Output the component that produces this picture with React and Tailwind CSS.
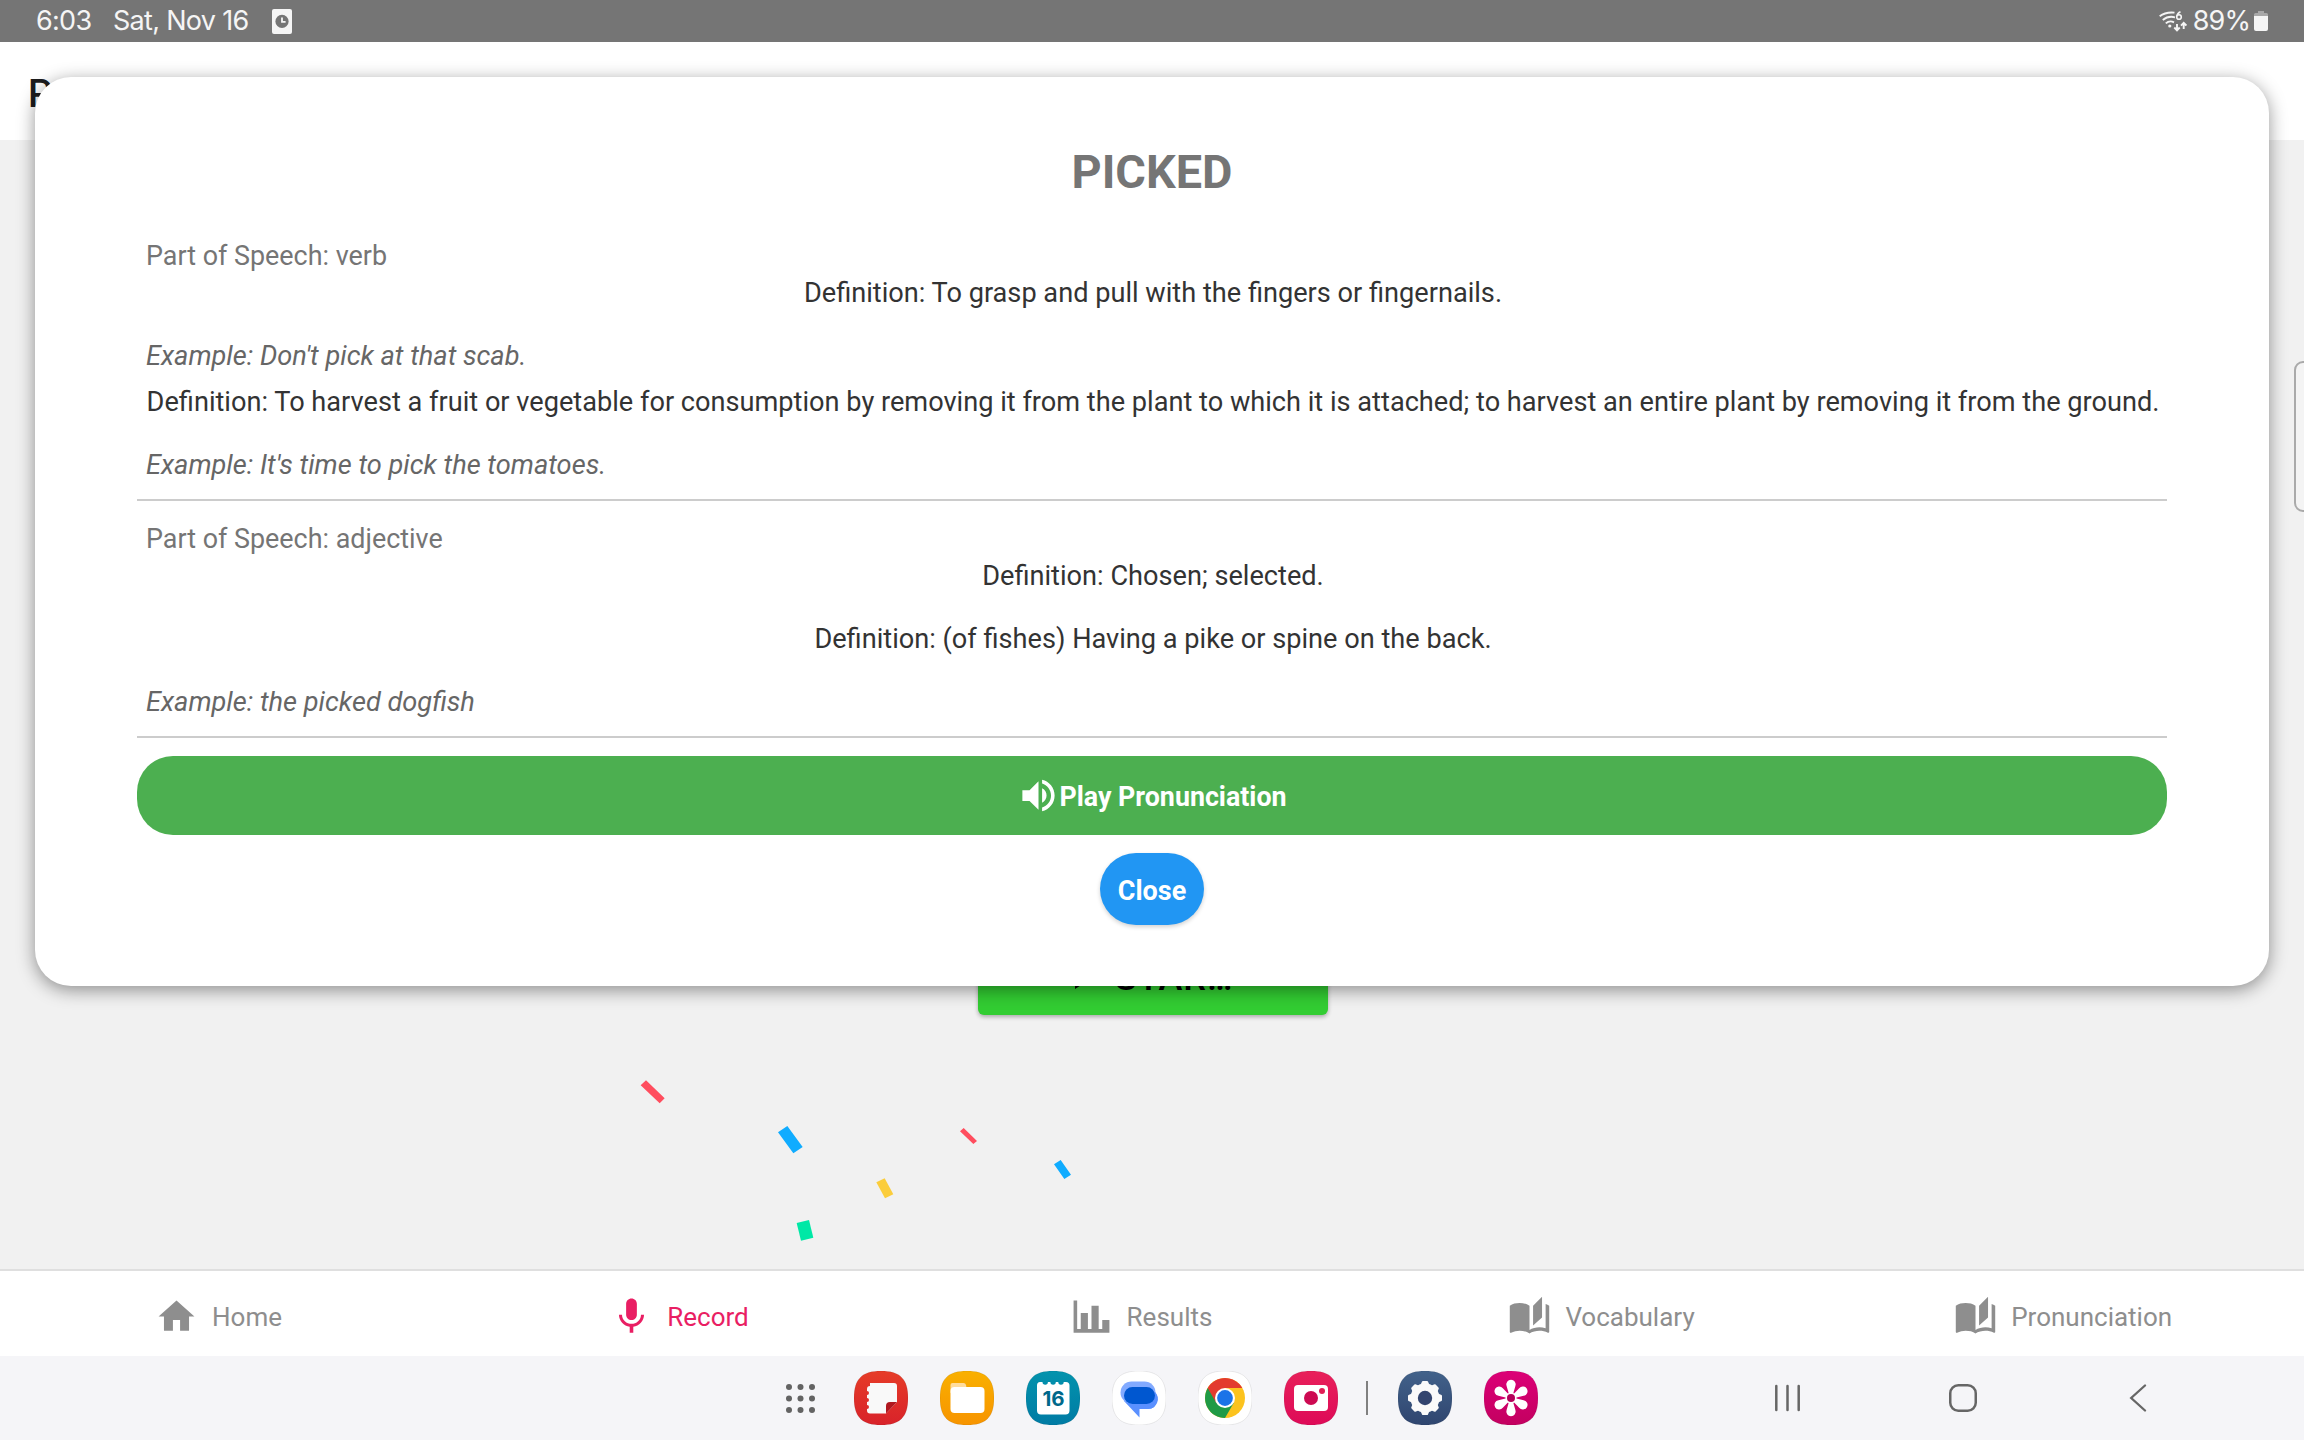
import { MdHome, MdMic, MdAutoStories, MdVolumeUp, MdPlayArrow } from "react-icons/md";

const SQUIRCLE = "M27 0C46 0 54 8 54 27S46 54 27 54 0 46 0 27 8 0 27 0Z";

function StatusBar() {
  return (
    <div className="flex h-[42px] shrink-0 items-center justify-between bg-[#757575] pl-9 pr-9 font-[Inter] text-[27px] leading-[42px] text-[#f5f5f5]">
      <div className="flex items-center">
        <span className="w-[77px] tracking-[-0.7px]">6:03</span>
        <span className="w-[159px] whitespace-nowrap tracking-[-0.7px]">Sat, Nov 16</span>
        <svg className="h-[25px] w-5" viewBox="0 0 20 25">
          <rect width="20" height="25" rx="2" fill="#f5f5f5" />
          <circle cx="10" cy="12.4" r="6.6" fill="#757575" />
          <path d="M10 8.5v4.4h3.6" fill="none" stroke="#f5f5f5" strokeWidth="1.8" />
        </svg>
      </div>
      <div className="flex items-center">
        <svg className="mr-[6px] h-[22px] w-7" viewBox="0 0 28 22" fill="none" stroke="#f5f5f5" strokeWidth="1.9">
          <path d="M.7 6.2Q6.5 1.7 15.5 2.6M3.8 10Q9 5.6 16 7.3M6.8 13.4Q10.5 10 15 12.3" />
          <circle cx="10.8" cy="16" r="1.6" fill="#f5f5f5" stroke="none" />
          <circle cx="20" cy="7" r="2.3" strokeWidth="1.6" />
          <path d="M18 6Q18.4 3 21.5 1.8" strokeWidth="1.6" />
          <path d="M18 14v6M15.3 17.5l2.7 2.8 2.7-2.8M24.7 19v-6M22 15.6l2.7-2.8 2.7 2.8" />
        </svg>
        <span className="mr-[4px] tracking-[-0.9px]">89%</span>
        <svg className="h-5 w-[14px]" viewBox="0 0 14 20">
          <path d="M0 5V3.5Q0 2 1.5 2H4V0h6v2h2.500Q14 2 14 3.5V5Z" fill="#a8a8a8" />
          <path d="M0 5h14v13q0 2-2 2H2q-2 0-2-2Z" fill="#f5f5f5" />
        </svg>
      </div>
    </div>
  );
}

function Part({ children }) {
  return <p className="h-[37px] px-[9px] text-[26.9px] text-[#757575]">{children}</p>;
}

function Definition({ children }) {
  return <p className="-mr-[10px] -ml-2 mb-[26px] h-[37px] whitespace-nowrap text-center text-[27.16px] text-[#333333]">{children}</p>;
}

function Example({ children }) {
  return <p className="h-[37px] px-[9px] text-[27.2px] italic text-[#666666]">{children}</p>;
}

function WordDialog() {
  return (
    <div className="absolute top-[77px] left-[35px] flex h-[909px] w-[2234px] flex-col rounded-[36px] bg-white px-[102px] text-[27px] leading-[37px] shadow-[0_4px_18px_rgba(0,0,0,0.42)]">
      <h1 className="mt-[65px] h-[60px] text-center text-[46.8px] leading-[60px] font-bold text-[#757575]">PICKED</h1>
      <section className="mt-[36px] h-[263px] border-b-2 border-[#cccccc]">
        <Part>Part of Speech: verb</Part>
        <Definition>Definition: To grasp and pull with the fingers or fingernails.</Definition>
        <Example>Example: Don't pick at that scab.</Example>
        <div className="h-[9px]" />
        <Definition>
          Definition: To harvest a fruit or vegetable for consumption by removing it from the plant to which it is attached; to harvest an entire plant by removing it from the ground.
        </Definition>
        <Example>Example: It's time to pick the tomatoes.</Example>
      </section>
      <section className="mt-[20px] h-[217px] border-b-2 border-[#cccccc]">
        <Part>Part of Speech: adjective</Part>
        <Definition>Definition: Chosen; selected.</Definition>
        <Definition>Definition: (of fishes) Having a pike or spine on the back.</Definition>
        <Example>Example: the picked dogfish</Example>
      </section>
      <button className="mt-[18px] flex h-[79px] shrink-0 items-center justify-center rounded-[36px] bg-[#4caf50] text-[26.8px] font-bold text-white">
        <MdVolumeUp className="size-[43px]" />
        <span className="-ml-[1px] pt-[3px]">Play Pronunciation</span>
      </button>
      <button className="mt-[18px] h-[72px] w-[104px] shrink-0 self-center rounded-[36px] bg-[#2196f3] pt-[4px] font-bold text-white shadow-[0_2px_4px_rgba(0,0,0,0.18)]">
        Close
      </button>
    </div>
  );
}

function Confetti() {
  return (
    <svg className="absolute top-[1060px] left-[620px] h-[200px] w-[480px]" viewBox="0 0 1440 600">
      <path fill="#ff4d5e" d="M62 76L78 61 134 115 119 130ZM1020 214L1031 204 1071 243 1060 252Z" />
      <path fill="#10acff" d="M474 217L502 198 548 261 520 280ZM1302 313L1322 300 1353 344 1333 357Z" />
      <path fill="#fbcd3b" d="M769 367L794 355 820 403 795 415Z" />
      <path fill="#00e8a6" d="M530 489L567 480 580 533 543 542Z" />
    </svg>
  );
}

function ChartIcon({ className }) {
  return (
    <svg className={className} viewBox="0 0 24 24" fill="currentColor">
      <path d="M22 21H2V3h2v16h2v-9h4v9h2V6h4v13h2v-5h4v7Z" />
    </svg>
  );
}

const TABS = [
  { label: "Home", icon: MdHome, pad: "pl-[155px]" },
  { label: "Record", icon: MdMic, pad: "pl-[149.500px]", active: true },
  { label: "Results", icon: ChartIcon, pad: "pl-[148px]" },
  { label: "Vocabulary", icon: MdAutoStories, pad: "pl-[126px]" },
  { label: "Pronunciation", icon: MdAutoStories, pad: "pl-[111px]" },
];

function TabBar() {
  return (
    <nav className="grid h-[87px] shrink-0 grid-cols-5 border-t-2 border-[#dfdfdf] bg-white">
      {TABS.map(({ label, icon: Icon, pad, active }) => (
        <div key={label} className={`flex items-center pt-[5px] ${pad} ${active ? "text-[#e91e63]" : "text-[#8e8e8e]"}`}>
          <Icon className="size-[43px]" />
          <span className="ml-[14px] pt-[3px] text-[26px] whitespace-nowrap">{label}</span>
        </div>
      ))}
    </nav>
  );
}

function AppIcon({ id, from, to, children }) {
  return (
    <svg className="size-[54px]" viewBox="0 0 54 54">
      <defs>
        <linearGradient id={id} x2="0" y2="1">
          <stop stopColor={from} />
          <stop offset="1" stopColor={to} />
        </linearGradient>
      </defs>
      <path d={SQUIRCLE} fill={`url(#${id})`} stroke="#00000014" strokeWidth="1" />
      {children}
    </svg>
  );
}

function Taskbar() {
  return (
    <div className="flex h-[84px] shrink-0 items-center bg-[#f5f5f8] pl-[786px]">
      <svg className="mr-[25px] size-[29px]" viewBox="0 0 29 29" fill="#636363">
        {[3, 14.5, 26].map((y) => [3, 14.5, 26].map((x) => <circle key={`${x}-${y}`} cx={x} cy={y} r="3" />))}
      </svg>
      <div className="ml-[14px] flex gap-8">
        <AppIcon id="notes" from="#e63c28" to="#d8222a">
          <path d="M16 12h24q3 0 3 3v16l-11 11.500H16q-3 0-3-3v-1.500a2 2 0 0 0 0-4v-3a2 2 0 0 0 0-4v-3a2 2 0 0 0 0-4v-2q0-3 3-3Z" fill="#f9f9f9" />
          <path d="M32 42.500V35q0-4 4-4h7Z" fill="#b0181f" />
        </AppIcon>
        <AppIcon id="files" from="#f9b000" to="#f79400">
          <path d="M10.500 22V14q0-2 2-2h11q2 0 2.500 2l.5 3Z" fill="#ffdc9c" />
          <rect x="10.500" y="16" width="34" height="26" rx="4" fill="#fff" />
        </AppIcon>
        <AppIcon id="calendar" from="#0393ad" to="#007ba4">
          <path d="M14 11h2.500a2.700 2.700 0 0 0 5.400 0h2.500a2.700 2.700 0 0 0 5.400 0h2.500a2.700 2.700 0 0 0 5.400 0H40q3.500 0 3.500 3.500v25q0 4-4 4h-24.500q-4 0-4-4v-25q0-3.500 3-3.500Z" fill="#fff" />
          <text x="27.500" y="35" textAnchor="middle" fontFamily="Inter" fontWeight="700" fontSize="20.500" fill="#00688a">16</text>
        </AppIcon>
        <AppIcon id="messages" from="#fff" to="#fff">
          <path d="M12 30L27.500 46.500V38H35q10 0 10-10t-10-10H20Z" fill="#5a90ff" />
          <rect x="8.500" y="10.500" width="35" height="22" rx="11" fill="#82aaff" />
          <path d="M36 38a10 10 0 0 0 7-17L30 32l-3 6Z" fill="#5a90ff" />
          <rect x="12" y="16" width="31" height="17" rx="8.500" fill="#0057d0" />
        </AppIcon>
        <AppIcon id="chrome" from="#fff" to="#fff">
          <circle cx="27" cy="27" r="20" fill="#fcc31e" />
          <path d="M9.700 17A20 20 0 0 0 27 47L35.700 32 27 27Z" fill="#1f9a46" />
          <path d="M9.700 17A20 20 0 0 1 44.300 17H27V27L18.300 32Z" fill="#e33b2e" />
          <circle cx="27" cy="27" r="10" fill="#fff" />
          <circle cx="27" cy="27" r="7.900" fill="#1a73e8" />
        </AppIcon>
        <AppIcon id="camera" from="#e8205a" to="#de0a58">
          <rect x="10" y="14" width="34" height="26" rx="4" fill="#fff" />
          <circle cx="27" cy="27" r="7" fill="#cd0a52" />
          <circle cx="38" cy="20" r="3" fill="#e11d55" />
        </AppIcon>
      </div>
      <div className="mr-[30px] ml-[28px] h-[34px] w-[2px] bg-[#808080]" />
      <div className="flex gap-8">
        <AppIcon id="settings" from="#42628a" to="#2f456f">
          <circle cx="27" cy="27" r="14.500" fill="#fafafa" />
          {[0, 45, 90, 135, 180, 225, 270, 315].map((a) => (
            <path key={a} d="M22.500 14L24 10.500q.3-.5 1-.5h4q.7 0 1 .5L31.500 14Z" fill="#fafafa" transform={`rotate(${a} 27 27)`} />
          ))}
          <circle cx="27" cy="27" r="7.200" fill="#33456f" />
        </AppIcon>
        <AppIcon id="gallery" from="#dc0077" to="#c30060">
          {[0, 60, 120, 180, 240, 300].map((a) => (
            <path key={a} d="M25.500 25L22.600 15a4.700 4.700 0 1 1 8.800 0L28.500 25Z" fill="#fff" transform={`rotate(${a} 27 27)`} />
          ))}
          <circle cx="27" cy="27" r="5.500" fill="#fff" />
          <circle cx="27" cy="27" r="4" fill="#b4005a" />
        </AppIcon>
      </div>
      <div className="ml-[236px] flex items-center text-[#666666]">
        <svg className="h-7 w-[26px]" viewBox="0 0 26 28" stroke="currentColor" strokeWidth="2.500" strokeLinecap="round">
          <path d="M2.300 2v24M13.500 2v24M24.700 2v24" />
        </svg>
        <svg className="ml-[149px] h-7 w-[28px]" viewBox="0 0 28 28" fill="none" stroke="currentColor" strokeWidth="2.500">
          <rect x="1.250" y="1.250" width="25.500" height="25.500" rx="8" />
        </svg>
        <svg className="ml-[152px] h-7 w-[18px]" viewBox="0 0 18 28" fill="none" stroke="currentColor" strokeWidth="2.300" strokeLinecap="round">
          <path d="M16 1.500L2.200 14 16 26.500" />
        </svg>
      </div>
    </div>
  );
}

export default function App() {
  return (
    <div className="relative flex h-[1440px] w-[2304px] flex-col overflow-hidden bg-[#f1f1f1] font-[Roboto,sans-serif]">
      <StatusBar />
      <header className="flex h-[98px] shrink-0 items-center bg-white pl-[28px] text-[38px] font-medium text-[#1c1c1e]">
        <span className="pt-[6px]">P</span>
      </header>
      <main className="flex min-h-0 flex-1 flex-col items-center pt-[795px] pl-[2px]">
        <div className="flex h-20 w-[350px] shrink-0 items-end justify-center rounded-[6px] bg-[#32cd32] pb-[19px] text-[36px] leading-[36px] font-medium text-black shadow-[0_2px_4px_rgba(0,0,0,0.3)]">
          <MdPlayArrow className="mr-[8px] -mb-[3px] size-[48px]" />
          <span className="mr-[14px] tracking-[0.9px]">STAR…</span>
        </div>
      </main>
      <TabBar />
      <Taskbar />
      <Confetti />
      <div className="absolute top-[361px] right-[-20px] h-[151px] w-[30px] rounded-[9px] border-2 border-[#aaaaaa] bg-[#f4f4f4]" />
      <WordDialog />
    </div>
  );
}
